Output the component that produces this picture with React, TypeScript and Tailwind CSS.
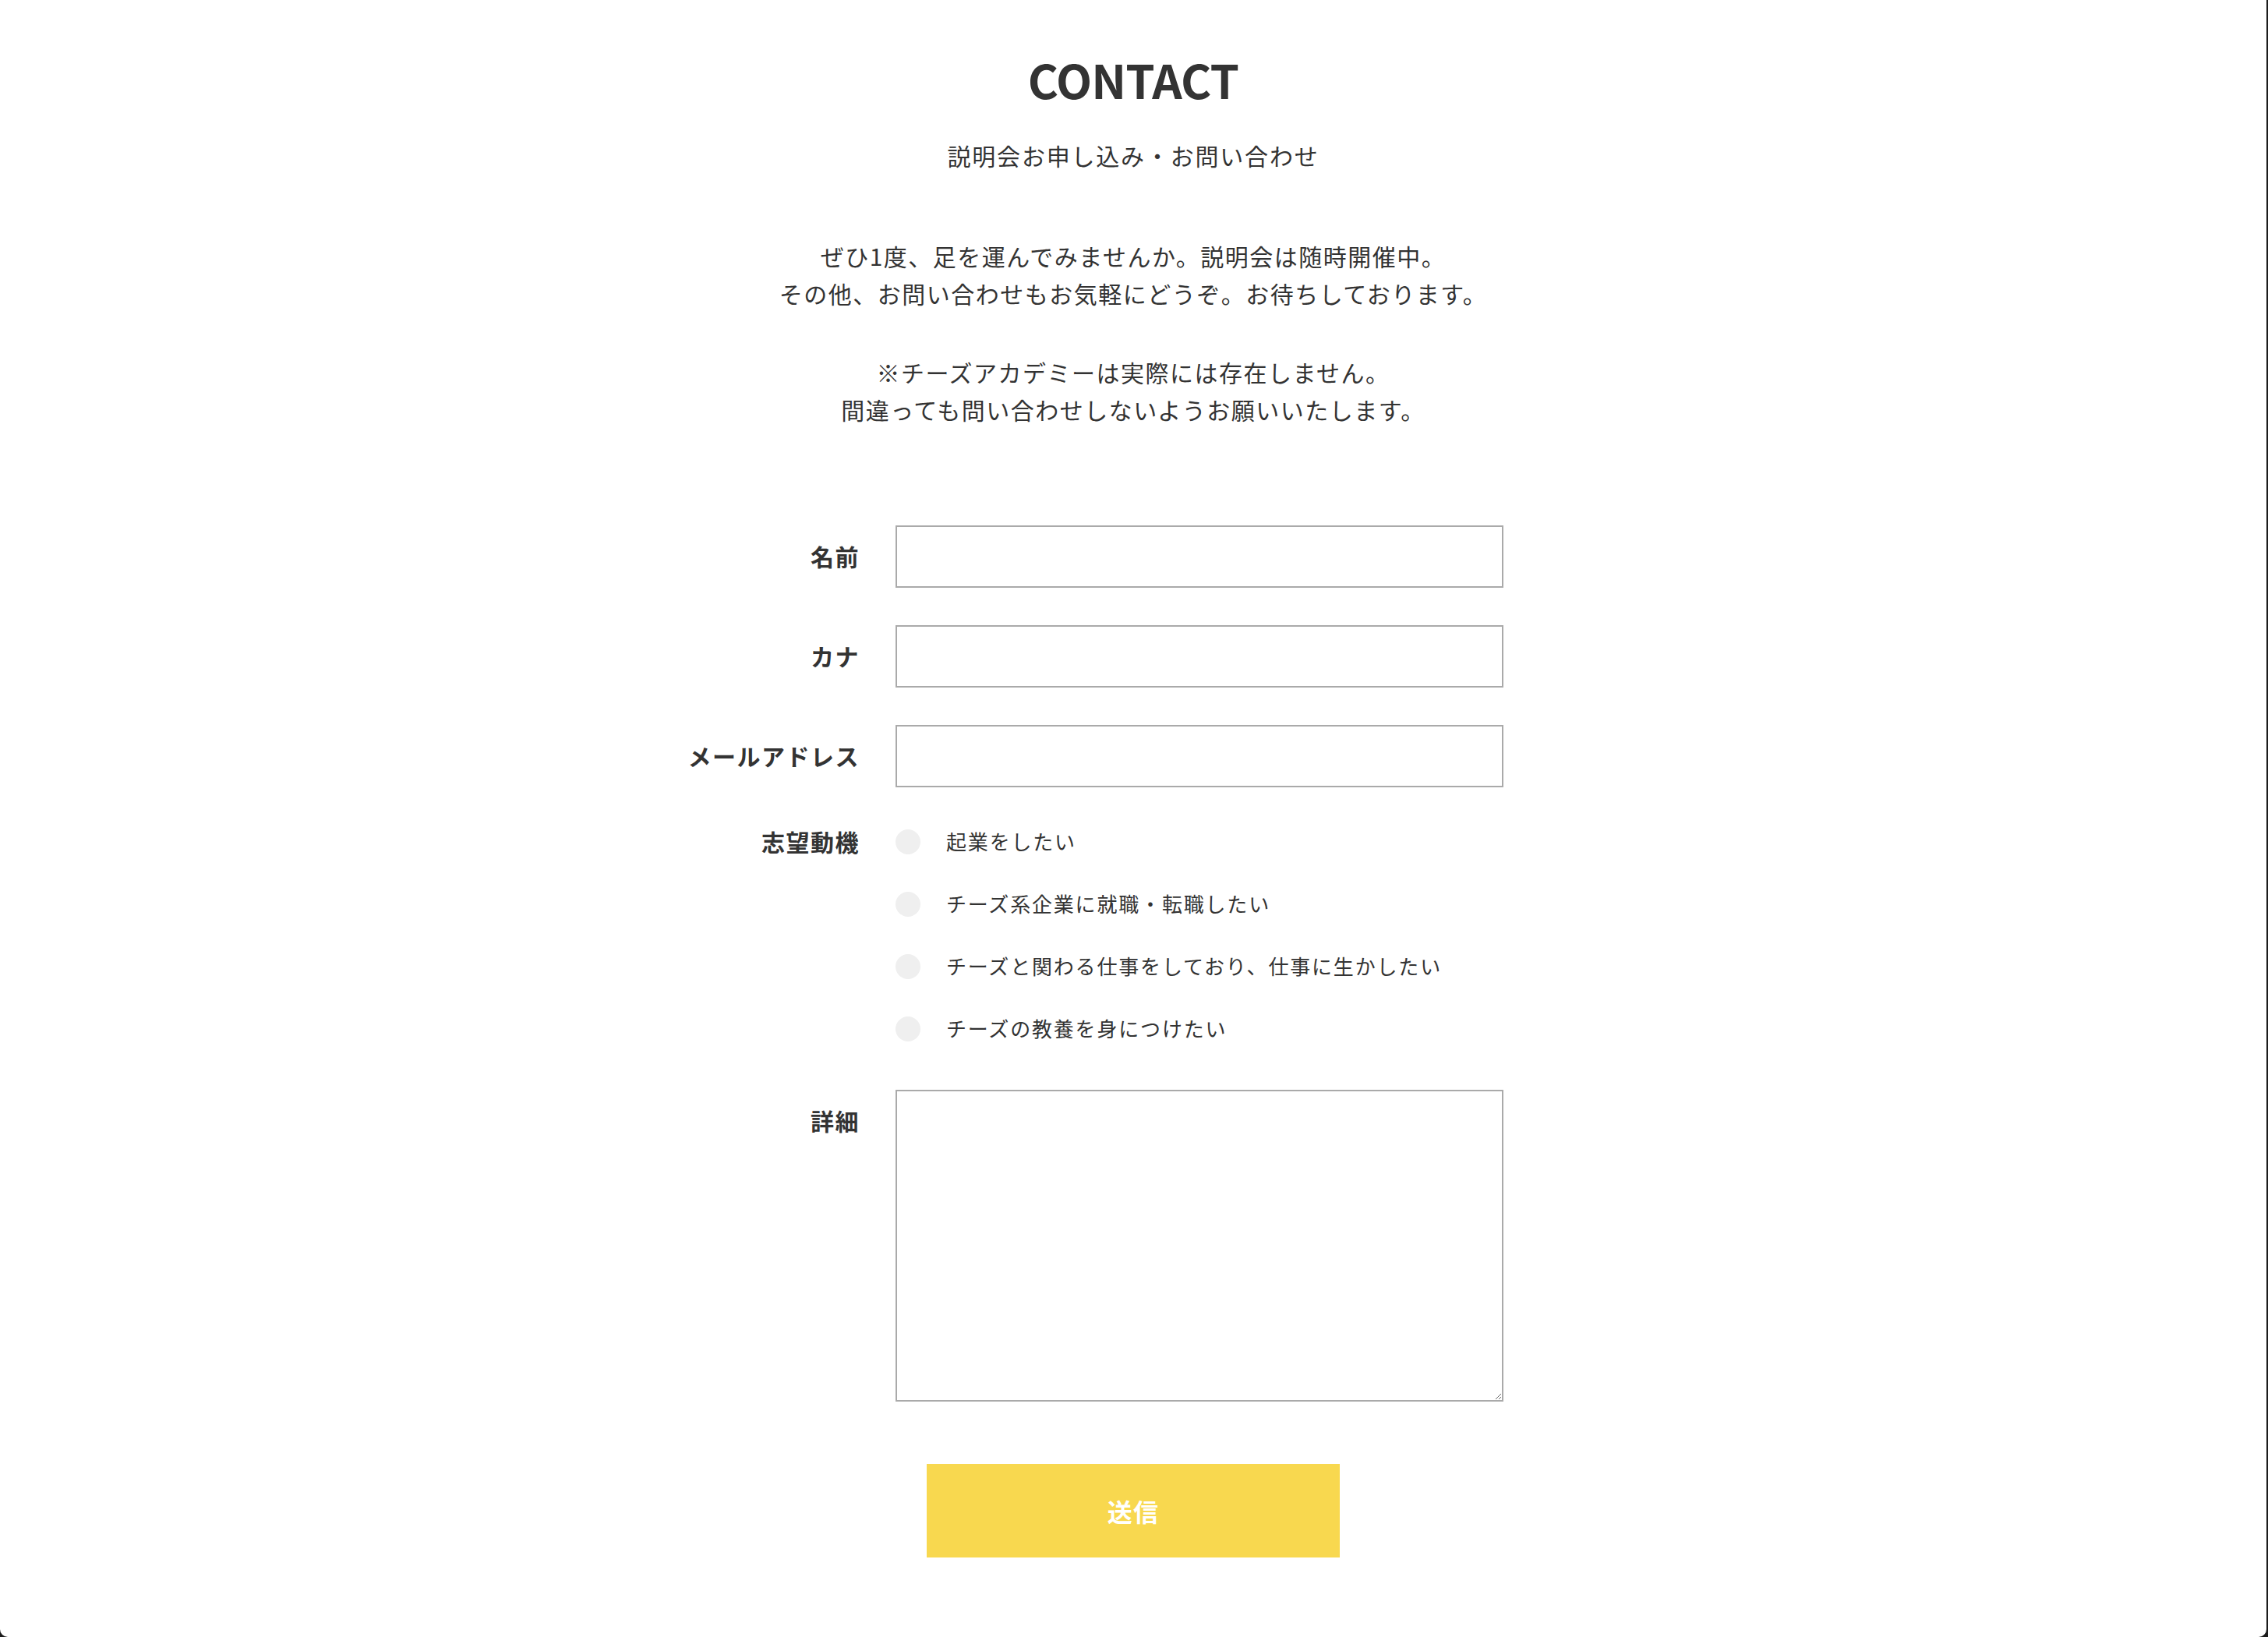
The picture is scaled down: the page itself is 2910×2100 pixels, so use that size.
import React from "react";

const jp = { fontFamily: '"Noto Sans CJK JP", "Noto Sans", sans-serif' };

function Row({ label, children }: { label: string; children: React.ReactNode }) {
  return (
    <div className="flex">
      <div className="w-[429px] shrink-0 flex justify-end h-[80px] items-center pb-[2px] text-[30px] font-bold text-[#333] tracking-[0.05em]">
        {label}
      </div>
      <div className="ml-[46px] w-[780px]">{children}</div>
    </div>
  );
}

export default function App() {
  const reasons = [
    "起業をしたい",
    "チーズ系企業に就職・転職したい",
    "チーズと関わる仕事をしており、仕事に生かしたい",
    "チーズの教養を身につけたい",
  ];
  return (
    <div className="h-[2100px] bg-[#1c1c1c] overflow-hidden">
      <div className="h-full mr-[2px] bg-white rounded-b-[10px] text-[#333]" style={jp}>
        <div className="pt-[71px] flex flex-col items-center">
          <h1 className="text-[60px] leading-[60px] font-bold tracking-[-0.015em] text-[#333]">CONTACT</h1>
          <p className="mt-[43px] text-[30px] leading-[50px] tracking-[0.06em]">説明会お申し込み・お問い合わせ</p>
          <div className="mt-[80px] text-center text-[30px] leading-[48px] tracking-[0.05em]">
            <p>
              ぜひ1度、足を運んでみませんか。説明会は随時開催中。
              <br />
              その他、お問い合わせもお気軽にどうぞ。お待ちしております。
            </p>
            <p className="mt-[53px]">
              ※チーズアカデミーは実際には存在しません。
              <br />
              間違っても問い合わせしないようお願いいたします。
            </p>
          </div>
        </div>

        <form className="mt-[125px] w-[1560px] mx-auto" onSubmit={(e) => e.preventDefault()}>
          <div className="flex flex-col gap-[48px]">
            <Row label="名前">
              <input type="text" className="block w-[780px] h-[80px] border-2 border-[#aaa] bg-white outline-none px-4 text-[28px]" />
            </Row>
            <Row label="カナ">
              <input type="text" className="block w-[780px] h-[80px] border-2 border-[#aaa] bg-white outline-none px-4 text-[28px]" />
            </Row>
            <Row label="メールアドレス">
              <input type="email" className="block w-[780px] h-[80px] border-2 border-[#aaa] bg-white outline-none px-4 text-[28px]" />
            </Row>
          </div>

          <div className="mt-[30px]">
            <Row label="志望動機">
              <div className="flex flex-col">
                {reasons.map((r) => (
                  <label key={r} className="h-[80px] flex items-center cursor-pointer">
                    <span className="w-[32px] h-[32px] rounded-full bg-[#efefef] shrink-0" />
                    <span className="ml-[33px] pb-[4px] text-[26px] tracking-[0.07em] text-[#333]">{r}</span>
                  </label>
                ))}
              </div>
            </Row>
          </div>

          <div className="mt-[38px] flex">
            <div className="w-[429px] shrink-0 flex justify-end items-start">
              <div className="h-[80px] flex items-center pb-[2px] text-[30px] font-bold tracking-[0.05em] text-[#333]">詳細</div>
            </div>
            <div className="ml-[46px] w-[780px]">
              <textarea className="block w-[780px] h-[400px] border-2 border-[#aaa] bg-white outline-none p-4 text-[28px]" />
            </div>
          </div>

          <div className="mt-[80px] flex justify-center">
            <button
              type="submit"
              className="w-[530px] h-[120px] bg-[#f8d84f] text-white text-[32px] font-bold tracking-[0.04em]"
            >
              送信
            </button>
          </div>
        </form>
      </div>
    </div>
  );
}
